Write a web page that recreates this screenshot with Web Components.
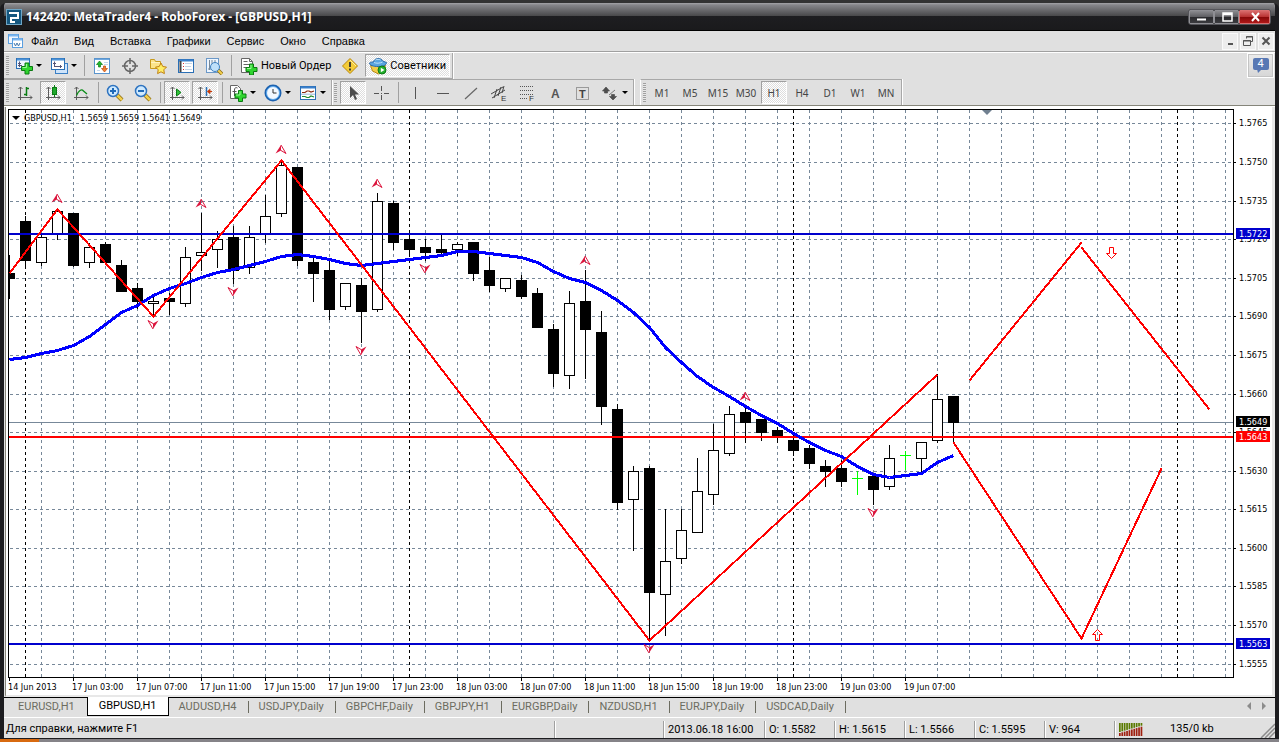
<!DOCTYPE html>
<html lang="ru">
<head>
<meta charset="utf-8">
<title>142420: MetaTrader4 - RoboForex - [GBPUSD,H1]</title>
<style>
html, body { margin: 0; height: 100%; background: #333; }
body { font: 11px/16px Roboto, "Liberation Sans", sans-serif; color: #000; overflow: hidden; }
</style>
</head>
<body>
<mt-window>
  <mt-titlebar slot="title">142420: MetaTrader4 - RoboForex - [GBPUSD,H1]</mt-titlebar>
  <mt-menubar slot="menu" items="Файл|Вид|Вставка|Графики|Сервис|Окно|Справка"></mt-menubar>
  <mt-toolbars slot="tools">
    <mt-toolbar label="Стандартная">
      <mt-button icon="newchart" label="Новый график" drop></mt-button>
      <mt-button icon="profiles" label="Профили" drop></mt-button>
      <mt-sep wide></mt-sep>
      <mt-button icon="market" label="Обзор рынка"></mt-button>
      <mt-button icon="target" label="Окно данных"></mt-button>
      <mt-button icon="folder" label="Навигатор"></mt-button>
      <mt-button icon="terminal" label="Терминал"></mt-button>
      <mt-button icon="tester" label="Тестер стратегий"></mt-button>
      <mt-sep wide></mt-sep>
      <mt-button icon="order" label="Новый Ордер" text>Новый Ордер</mt-button>
      <mt-button icon="warn" label="MetaEditor"></mt-button>
      <mt-button icon="expert" label="Советники" text pressed>Советники</mt-button>
    </mt-toolbar>
    <mt-message slot="aside">4</mt-message>
    <mt-toolbar slot="second" label="Графики">
      <mt-button icon="bars" label="Бары"></mt-button>
      <mt-button icon="candles" label="Японские свечи" pressed></mt-button>
      <mt-button icon="line" label="Линия"></mt-button>
      <mt-sep></mt-sep>
      <mt-button icon="zoomin" label="Увеличить"></mt-button>
      <mt-button icon="zoomout" label="Уменьшить"></mt-button>
      <mt-sep></mt-sep>
      <mt-button icon="autoscroll" label="Автопрокрутка" pressed></mt-button>
      <mt-button icon="shift" label="Сдвиг графика" pressed></mt-button>
      <mt-sep></mt-sep>
      <mt-button icon="indicators" label="Индикаторы" drop></mt-button>
      <mt-button icon="clock" label="Периоды" drop></mt-button>
      <mt-button icon="template" label="Шаблоны" drop></mt-button>
    </mt-toolbar>
    <mt-toolbar slot="second" label="Инструменты">
      <mt-button icon="cursor" label="Курсор" pressed></mt-button>
      <mt-button icon="cross" label="Перекрестие"></mt-button>
      <mt-sep></mt-sep>
      <mt-button icon="vline" label="Вертикальная линия"></mt-button>
      <mt-button icon="hline" label="Горизонтальная линия"></mt-button>
      <mt-button icon="trend" label="Трендовая линия"></mt-button>
      <mt-button icon="channel" label="Канал"></mt-button>
      <mt-button icon="fibo" label="Фибоначчи"></mt-button>
      <mt-button icon="text" label="Текст"></mt-button>
      <mt-button icon="label" label="Метка"></mt-button>
      <mt-button icon="arrows" label="Стрелки" drop></mt-button>
    </mt-toolbar>
    <mt-toolbar slot="second" label="Период" apart>
      <mt-button>M1</mt-button><mt-button>M5</mt-button><mt-button>M15</mt-button><mt-button>M30</mt-button><mt-button pressed>H1</mt-button><mt-button>H4</mt-button><mt-button>D1</mt-button><mt-button>W1</mt-button><mt-button>MN</mt-button>
    </mt-toolbar>
  </mt-toolbars>
  <mt-chart></mt-chart>
  <mt-tabs slot="tabs" active="1" items="EURUSD,H1|GBPUSD,H1|AUDUSD,H4|USDJPY,Daily|GBPCHF,Daily|GBPJPY,H1|EURGBP,Daily|NZDUSD,H1|EURJPY,Daily|USDCAD,Daily"></mt-tabs>
  <mt-status slot="status"></mt-status>
</mt-window>

<script>
const define = (name, html, init) => {
  const tpl = document.createElement('template');
  tpl.innerHTML = html;
  customElements.define(name, class extends HTMLElement {
    constructor() {
      super();
      this.attachShadow({ mode: 'open' }).append(tpl.content.cloneNode(true));
    }
    connectedCallback() { if (init && !this.ready) { this.ready = true; init(this, this.shadowRoot); } }
  });
};

/* ---------- icons, 18x18 grid ---------- */
const plus = (x, y) => `<path d="M${x + 3.5} ${y}h4v3.5h3.5v4h-3.5v3.5h-4v-3.5h-3.5v-4h3.5z" fill="#2fd52f" stroke="#0b7a12"/><path d="M${x + 5} ${y + 1}v3.5h-4" fill="none" stroke="#9df59a"/>`;
const axes = '<path d="M4.500 3v13M2 13.500h14M2.500 5l2-2 2 2M14 11.500l2 2-2 2" fill="none" stroke="#5c5c5c"/>';
const lens = inner => `<path d="M11 11l5 5" stroke="#8a6a10" stroke-width="4"/><path d="M11 11l5 5" stroke="#f2cf4c" stroke-width="2.500"/><circle cx="7" cy="7" r="5.500" fill="#cfeaff" stroke="#2f74c0" stroke-width="1.500"/>${inner}`;
const ICONS = {
  newchart: `<rect x="1.500" y="1.500" width="13" height="10" fill="#eef6ff" stroke="#2a6fb5"/><path d="M2 2.500h12" stroke="#4d93d8" stroke-width="2"/><path d="M4.500 4.500v5.500M3 8.500h4M3 6.500h3" stroke="#557" fill="none"/>${plus(6.5, 6)}`,
  profiles: `<rect x="5.500" y="6.500" width="12" height="10" fill="#cfe4fa" stroke="#3a7fc5"/><rect x="1.500" y="1.500" width="13" height="11" fill="#fff" stroke="#2a6fb5"/><path d="M2 2.500h12" stroke="#4d93d8" stroke-width="2"/><path d="M4.500 4.500v5M3 6.500h3M4 9.500h8M10.500 8v3" stroke="#557" fill="none"/>`,
  market: `<rect x="1.500" y="1.500" width="15" height="15" fill="#fff" stroke="#5a94cc"/><path d="M2 2.500h14" stroke="#6fa8e0"/><path d="M11 5.500h4M11 7.500h4M4 13.500h3" stroke="#c4d8ec"/><path d="M6.500 4l3 3.500h-2v2.500h-2v-2.500h-2z" fill="#1db82c" stroke="#0b7a12" stroke-width=".7"/><path d="M11.500 15l-3-3.500h2v-2.500h2v2.500h2z" fill="#f08030" stroke="#c04808" stroke-width=".7"/>`,
  target: `<circle cx="9" cy="9" r="5.500" fill="none" stroke="#666" stroke-width="1.500"/><path d="M9 1v6M9 11v6M1 9h6M11 9h6" stroke="#666" stroke-width="1.500"/>`,
  folder: `<path d="M1.500 2.500h4l1 2h5v7h-10z" fill="#fbe48a" stroke="#c79a1c"/><path d="M2 5.500h9" stroke="#fff4c0"/><path d="M12 6l1.800 3.500 3.700.6-2.700 2.700.6 3.800-3.400-1.800-3.400 1.800.6-3.800-2.700-2.700 3.700-.6z" fill="#ffee66" stroke="#c08010"/>`,
  terminal: `<rect x="1.500" y="2.500" width="15" height="13" fill="#fff" stroke="#2a6fb5"/><path d="M2 3.500h14" stroke="#3a80cc" stroke-width="2"/><path d="M3.500 4v11" stroke="#444" stroke-width="2"/><path d="M6 6.500h1M6 9.500h1M6 12.500h1" stroke="#d33"/><path d="M8 6.500h7M8 9.500h6M8 12.500h7" stroke="#c4d4e6"/>`,
  tester: `<rect x="1.500" y="1.500" width="12" height="14" fill="#eef6ff" stroke="#6b98c8"/><path d="M4.500 3v10M3 12h4M7 3v4M10 3v3" stroke="#789"/><path d="M13 13l4 4" stroke="#8a6a10" stroke-width="3.500"/><path d="M13 13l4 4" stroke="#f2cf4c" stroke-width="2"/><circle cx="10" cy="10" r="4.500" fill="#bfe0fa" stroke="#3f80c0"/>`,
  order: `<path d="M1.500 1.500h8l3 3v11h-11z" fill="#fff" stroke="#666"/><path d="M9.500 1.500v3h3" fill="none" stroke="#666"/><path d="M3.500 4.500h4M3.500 7.500h7M3.500 10.500h4" stroke="#666"/>${plus(6, 7)}`,
  warn: `<path d="M9 1.500l7.500 7.500-7.500 7.500-7.500-7.500z" fill="#f4cc38" stroke="#b8860b" stroke-linejoin="round"/><path d="M9 3l6 6" stroke="#fff0a0"/><path d="M9 5v5M9 11.500v2" stroke="#333" stroke-width="1.800"/>`,
  expert: `<path d="M1.500 8.500h15l-2 5-5 3.500-6-3z" fill="#f2cc48" stroke="#b98a18"/><path d="M4.500 5c1-4.500 8-4.500 9-1l4 1.500c0 3-4 4-8.500 4s-8.500-1-8.500-3.500c1-1 2-1 4-1z" fill="#5aa5e0" stroke="#2a6aa8"/><path d="M5 5.500c2 1 6 1 8.500-.5M6.500 3c1.500-1 3.500-1 5 0" fill="none" stroke="#bfe2fa"/><circle cx="13" cy="13" r="4" fill="#25b02e" stroke="#0b7a12"/><path d="M11.800 10.800v4.400l3.700-2.200z" fill="#fff"/>`,
  bars: `${axes}<path d="M10.500 3v9M8 10.500h2.500M10.500 4.500h2.500" fill="none" stroke="#0a7d14" stroke-width="1.500"/>`,
  candles: `${axes}<path d="M10.500 1v12" stroke="#0a7d14"/><rect x="8.500" y="3.500" width="4" height="7" fill="#1fa82c" stroke="#0a7d14"/>`,
  line: `${axes}<path d="M4.500 11.500c2-5 5-7 7-4.500l3.500 3" fill="none" stroke="#0a8d18" stroke-width="1.300"/>`,
  zoomin: lens('<path d="M4 7h6M7 4v6" stroke="#1f6ab8" stroke-width="2"/>'),
  zoomout: lens('<path d="M4 7h6" stroke="#1f6ab8" stroke-width="2"/>'),
  autoscroll: `${axes}<path d="M8.500 5l4.500 3.500-4.500 3.500z" fill="#2fc03a" stroke="#0a7d14"/>`,
  shift: `${axes}<path d="M10.500 3v9" stroke="#2a6fb5" stroke-width="1.500"/><path d="M12 7.500h4M14 5.500l-2.500 2 2.500 2z" stroke="#c63a08" fill="#c63a08"/>`,
  indicators: `<path d="M1.500 1.500h7l3 3v10h-10z" fill="#fff" stroke="#666"/><path d="M8.500 4c-2-1-3 0-3 2v6M3.500 7.500h4" fill="none" stroke="#555"/>${plus(6, 6.5)}`,
  clock: `<circle cx="9" cy="9" r="7.500" fill="#f2f8ff" stroke="#1c62b0" stroke-width="2"/><circle cx="9" cy="9" r="6.500" fill="none" stroke="#5aa8ee"/><path d="M9 5v4h3.500" fill="none" stroke="#333"/>`,
  template: `<rect x="1.500" y="2.500" width="15" height="13" fill="#fff" stroke="#2a6fb5"/><path d="M2 3.500h14" stroke="#3a80cc" stroke-width="2"/><path d="M3 8.500h3l2-1.500h2l2 1 3-1" fill="none" stroke="#8c2a10" stroke-width="1.200"/><path d="M3 12.500h3l2 1h2l2-1.500 3 1" fill="none" stroke="#1f8a2a" stroke-width="1.200"/><path d="M2 10.200h14" stroke="#9bb8d8"/>`,
  cursor: `<path d="M6 2v12l3-3 2 5 2-1-2-4.500h4z" fill="#4d4d4d"/>`,
  cross: `<path d="M9.500 2v5M9.500 11v5M2 9.500h5M12 9.500h5M9 9.500h1" stroke="#555"/>`,
  vline: `<path d="M9.500 3v12" stroke="#555"/>`,
  hline: `<path d="M3 9.500h12" stroke="#555"/>`,
  trend: `<path d="M3 15l12-11" stroke="#666" stroke-width="1.200"/>`,
  channel: `<path d="M1 10l12-7M2 14l13-8M4 14l3-9M8 12l3-9M12 9l2-7" stroke="#444" fill="none"/><text x="11" y="17" font-size="8" fill="#333" font-family="Liberation Sans">E</text>`,
  fibo: `<path d="M2 2.500h14M2 6.500h14M2 10.500h14M2 14.500h8" stroke="#555" stroke-dasharray="1 1"/><text x="11" y="17" font-size="8" fill="#333" font-family="Liberation Sans">F</text>`,
  text: `<text x="5" y="14" font-size="12" font-weight="700" fill="#555" font-family="Liberation Sans">A</text>`,
  label: `<rect x="2.500" y="3.500" width="12" height="12" fill="none" stroke="#555" stroke-dasharray="1 1"/><text x="5" y="14" font-size="11" font-weight="700" fill="#444" font-family="Liberation Sans">T</text>`,
  arrows: `<path d="M5 3l3.500 4h-2v2h-3v-2h-2zM12 16l-3.500-3.500h2v-2h3v2h2zM8 11l6-5" fill="#4d4d4d" stroke="#4d4d4d" stroke-width=".7"/>`,
};
const icon = n => `<svg width="18" height="18" viewBox="0 0 18 18" aria-hidden="true">${ICONS[n]}</svg>`;

/* ---------- window shell ---------- */
define('mt-window', `<style>
:host { display: flex; flex-direction: column; height: 100vh; box-sizing: border-box; padding-top: 3px; background: #333; }
.frame { flex: 1; min-height: 0; display: flex; flex-direction: column; background: #e0e0e0;
  border: solid #1c1c1f; border-width: 0 4px 1px; border-radius: 6px 6px 0 0; overflow: hidden; }
::slotted(mt-chart) { flex: 1; min-height: 0; }
.strip { height: 3px; background: linear-gradient(90deg, #d86a10 39px, #858388 39px); }
</style>
<div class="frame"><slot name="title"></slot><slot name="menu"></slot><slot name="tools"></slot><slot></slot><slot name="tabs"></slot><slot name="status"></slot></div>
<div class="strip"></div>`);

define('mt-titlebar', `<style>
:host { display: flex; align-items: center; height: 27px; margin: 0 -4px; padding: 0 8px 0 6px; border-bottom: 1px solid #000;
  background: linear-gradient(#a4a4a8, #86868a 2px, #48484a 13px, #1e1e21 13px, #1a1a1c); color: #fff; font: bold 12px/16px "Open Sans", sans-serif; }
svg { display: block; } .logo { margin-right: 4px; }
span { flex: 1; white-space: nowrap; overflow: hidden; }
.box { display: flex; border: 1px solid #55555a; border-radius: 3px; background: #111; }
button { width: 25px; height: 14px; padding: 0; border: 1px solid #8f8f94; border-radius: 1px; background: linear-gradient(#8a8a8e, #5c5c60 50%, #29292c 50%, #3c3c40); display: grid; place-items: center; }
button:last-child { width: 31px; border-color: #d87070; background: linear-gradient(#d86a6a, #b83030 50%, #860808 50%, #b01818); }
</style>
<svg class="logo" width="16" height="16" viewBox="0 0 16 16"><rect width="16" height="16" rx="1" fill="#15577f"/><rect x=".5" y=".5" width="15" height="15" fill="none" stroke="#6fa6c6"/><path d="M3 4h9v5h-7v4h4" fill="none" stroke="#fff" stroke-width="2"/></svg>
<span><slot></slot></span>
<div class="box">
<button aria-label="Свернуть"><svg width="12" height="10"><path d="M1 7.500h9" stroke="#fff" stroke-width="2"/></svg></button>
<button aria-label="Развернуть"><svg width="12" height="10"><path d="M2 1h9v8H2zM2 2.500h9" fill="none" stroke="#fff" stroke-width="1.500"/></svg></button>
<button aria-label="Закрыть"><svg width="12" height="10"><path d="M3 1l7 8M10 1l-7 8" stroke="#fff" stroke-width="2"/></svg></button>
</div>`);

define('mt-menubar', `<style>
:host { display: flex; align-items: center; height: 20px; padding-left: 4px; border-bottom: 1px solid #a0a0a0; box-shadow: 0 1px #fff; margin-bottom: 1px; font: 11px/16px "Liberation Sans", sans-serif; }
nav { display: flex; gap: 16px; flex: 1; padding-left: 8px; }
nav button { border: 0; padding: 0; background: none; font: inherit; color: #000; }
.mdi { display: flex; gap: 2px; padding-right: 1px; }
.mdi button { width: 16px; height: 17px; padding: 0; border: 1px solid #fafafa; background: #ededed; display: grid; place-items: center; }
</style>
<svg width="15" height="16" viewBox="0 0 15 16"><rect x=".5" y="1.500" width="10" height="9" fill="#eef6ff" stroke="#5a9fe0"/><path d="M1 2.500h9" stroke="#7ab6f0" stroke-width="2"/><rect x="4.500" y="5.500" width="10" height="9" fill="#fff" stroke="#5a9fe0"/><path d="M5 6.500h9" stroke="#7ab6f0" stroke-width="2"/><path d="M6 10l1.500 3 1.500-3 1.500 3 1.500-3" fill="none" stroke="#47a"/></svg>
<nav></nav>
<div class="mdi">
<button aria-label="Свернуть окно"><svg width="12" height="12"><path d="M4 9h5" stroke="#555" stroke-width="2"/></svg></button>
<button aria-label="Восстановить окно"><svg width="12" height="12"><path d="M4.500 3.500v-2h6v5h-2M4 2h7M1.500 5.500h7v5h-7zM1 6h8" fill="none" stroke="#555"/></svg></button>
<button aria-label="Закрыть окно"><svg width="12" height="12"><path d="M2.500 2.500l7 7M9.500 2.500l-7 7" stroke="#555" stroke-width="2"/></svg></button>
</div>`, (el, r) => {
  r.querySelector('nav').innerHTML = el.getAttribute('items').split('|').map(t => `<button>${t}</button>`).join('');
});

/* ---------- toolbars ---------- */
define('mt-toolbars', `<style>
:host { display: block; border-bottom: 1px solid #fff; }
.row { display: flex; height: 26px; }
.row + .row { border-bottom: 1px solid #85857a; }
.aside { margin-left: auto; }
</style>
<div class="row"><slot></slot><div class="aside"><slot name="aside"></slot></div></div>
<div class="row"><slot name="second"></slot></div>`);

define('mt-toolbar', `<style>
:host { display: flex; align-items: center; box-sizing: border-box; border: solid #a8a8a8; border-width: 0 1px 1px 0; padding-right: 1px; box-shadow: 1px 0 #fff; height: 26px; }
:host([slot=second]) { border-width: 1px 1px 0 0; }
:host([apart]) { margin-left: 6px; border-left: 1px solid #fff; }
.grip { width: 3px; height: 19px; margin: 0 2px; background: repeating-linear-gradient(#a0a0a0 0 1px, #e8e8e8 1px 2px); }
</style><div class="grip"></div><slot></slot>`, el => { el.setAttribute('role', 'toolbar'); el.setAttribute('aria-label', el.getAttribute('label')); });

define('mt-sep', `<style>
:host { display: block; width: 1px; height: 21px; margin: 0 2px 0 3px; background: #a0a0a0; }
:host([wide]) { margin-right: 3px; }
</style>`);

define('mt-button', `<style>
:host { display: block; }
button { box-sizing: border-box; width: 26px; height: 23px; margin: 0 1px; padding: 0; border: 1px solid transparent; background: none; display: flex; align-items: center; justify-content: center; font: 10px/16px "Noto Sans", sans-serif; color: #444; white-space: nowrap; }
.ico { display: contents; }
svg { display: block; flex: none; }
:host([text]) button { width: auto; padding: 0 3px; gap: 3px; font: 11px/16px Roboto, "Liberation Sans", sans-serif; color: #000; }
:host([pressed]) button { border-color: #a0a0a0 #fff #fff #a0a0a0; background: repeating-conic-gradient(#fff 0 25%, #dedede 0 50%) 0 0 / 2px 2px; }
:host([drop]) button { width: 33px; padding-left: 2px; gap: 3px; justify-content: flex-start; }
.caret { display: none; border: 3px solid transparent; border-top-color: #000; border-bottom: 0; }
:host([drop]) .caret { display: block; }
</style><button><span class="ico"></span><slot></slot><i class="caret"></i></button>`, (el, r) => {
  const n = el.getAttribute('icon'), b = r.querySelector('button');
  if (n) r.querySelector('.ico').innerHTML = icon(n);
  if (n && !el.hasAttribute('text')) b.setAttribute('aria-label', el.getAttribute('label'));
  if (el.hasAttribute('pressed')) b.setAttribute('aria-pressed', 'true');
});

define('mt-message', `<style>
:host { display: block; padding-right: 1px; }
button { display: grid; place-items: center; width: 27px; height: 25px; padding: 0; border: 1px solid #fff; outline: 1px solid #c4c4c4; outline-offset: -2px; background: linear-gradient(#ececec, #d6d6d6); }
.b { position: relative; width: 16px; height: 12px; border-radius: 2px; background: #5878b4; color: #fff; font: 11px/12px Roboto, sans-serif; margin-bottom: 4px; }
.b::after { content: ""; position: absolute; left: 4px; top: 11px; border: 4px solid transparent; border-top-color: #5878b4; border-bottom: 0; border-left-width: 1px; }
</style><button aria-label="Сообщения"><div class="b"><slot></slot></div></button>`);

/* ---------- chart ---------- */
/* x step is 16; each row: kind (0 hollow, 1 filled, 2 doji), high, body top, body bottom, low */
const CANDLES = [
  [1,255,273,278,299],[1,216,221,260,266],[0,234,237,262,266],[0,209,211,234,240],[1,213,213,265,267],[0,243,247,262,268],
  [1,242,244,262,264],[1,260,265,291,291],[1,283,288,301,309],[0,296,301,303,316],[1,293,298,301,315],[0,247,257,303,307],
  [0,213,252,255,271],[0,231,239,249,268],[1,226,237,270,284],[0,226,237,267,274],[0,195,216,234,243],[0,160,165,213,217],
  [1,167,167,260,266],[1,256,262,273,302],[1,261,270,309,320],[0,283,283,306,310],[1,278,285,311,343],[0,193,201,309,312],
  [1,201,203,242,250],[1,234,239,249,255],[1,239,247,252,261],[1,234,249,252,254],[0,242,244,249,256],[1,242,242,273,281],
  [1,257,270,285,292],[0,278,278,288,292],[1,275,280,296,299],[1,288,293,327,328],[1,324,329,373,387],[0,291,303,375,389],
  [1,270,301,329,379],[1,311,332,406,425],[1,404,409,502,510],[0,466,471,499,551],[1,466,468,592,639],[0,509,561,594,636],
  [0,509,530,558,564],[0,458,491,532,532],[0,424,450,494,505],[0,406,414,453,456],[1,408,412,422,443],[1,419,419,432,441],
  [1,427,430,435,443],[1,437,440,450,456],[1,445,448,463,469],[1,460,466,471,487],[1,460,468,481,487],[2,471,478,478,495],
  [1,474,476,489,505],[0,445,458,486,490],[2,451,455,455,470],[0,442,442,458,472],[0,374,399,440,443],[1,396,396,422,443],
];
const MA = [359,357,353,350,345,336,324,312,305,295,288,283,277,272,269,265,261,256,254,256,259,263,265,263,261,259,257,255,251,251,253,255,257,262,271,278,282,290,300,312,327,347,362,376,387,396,406,415,423,433,442,450,456,466,474,477,475,473,462,455];
const LEVELS = [[123,'1.5765'],[162,'1.5750'],[201,'1.5735'],[239,'1.5720'],[278,'1.5705'],[316,'1.5690'],[355,'1.5675'],[394,'1.5660'],[432,'1.5645'],[471,'1.5630'],[509,'1.5615'],[548,'1.5600'],[586,'1.5585'],[625,'1.5570'],[664,'1.5555']];
const TIMES = ['14 Jun 2013','17 Jun 03:00','17 Jun 07:00','17 Jun 11:00','17 Jun 15:00','17 Jun 19:00','17 Jun 23:00','18 Jun 03:00','18 Jun 07:00','18 Jun 11:00','18 Jun 15:00','18 Jun 19:00','18 Jun 23:00','19 Jun 03:00','19 Jun 07:00'];
const TAGS = [[234,'1.5722','#0000cd'],[422,'1.5649','#000'],[437,'1.5643','#f00'],[644,'1.5563','#0000cd']];

define('mt-chart', `<style>
:host { display: grid; grid-template: minmax(0, 1fr) 17px / minmax(0, 1fr) 38px; margin: 0 0 0 1px; padding: 2px 3px 0 2px; background: #fff; border-left: 1px solid #85857a; border-bottom: 2px solid #e8e8e8; box-shadow: inset -3px 0 #e8e8e8; font: 9px/12px "DejaVu Sans Condensed", "DejaVu Sans", sans-serif; }
.plot { position: relative; border: 1px solid #000; overflow: hidden; }
svg { display: block; width: 100%; height: 100%; overflow: hidden; shape-rendering: crispEdges; }
.price svg { overflow: visible; } .time { grid-column: 1 / 3; }
.smooth { shape-rendering: auto; }
.head { position: absolute; left: 3px; top: 2px; display: flex; gap: 4px; align-items: center; white-space: pre; }
.head i { border: 4px solid transparent; border-top-color: #000; border-bottom: 0; }
.head b { font-weight: 400; margin-right: 4px; }
</style><div class="plot"></div><div class="price"></div><div class="time"></div>`, (el, r) => {
  let s = '';
  for (const [y] of LEVELS) s += `<line x1="10" x2="3000" y1="${y + .5}" y2="${y + .5}" stroke="#778899" stroke-dasharray="3 3"/>`;
  for (let x = 41; x < 3000; x += 32) s += `<line x1="${x + .5}" x2="${x + .5}" y1="110" y2="2000" stroke="#778899" stroke-dasharray="3 3"/>`;
  for (const x of [25, 409, 793, 1177]) s += `<line x1="${x + .5}" x2="${x + .5}" y1="110" y2="2000" stroke="#000" stroke-dasharray="3 3"/>`;
  s += '<rect x="9" y="422" width="3000" height="1" fill="#778899"/>';
  CANDLES.forEach(([k, h, t, b, l], i) => {
    const x = 9 + 16 * i, c = k === 2 ? '#00ff00' : '#000';
    s += `<rect x="${x}" y="${h}" width="1" height="${l - h}" fill="${c}"/>`;
    if (k === 1) s += `<rect x="${x - 5}" y="${t}" width="11" height="${b - t + 1}"/>`;
    else if (k === 2) s += `<rect x="${x - 5}" y="${t}" width="11" height="1" fill="${c}"/>`;
    else s += `<rect x="${x - 4.5}" y="${t + .5}" width="10" height="${b - t}" fill="#fff" stroke="#000"/>`;
  });
  s += '<rect x="9" y="233" width="3000" height="2" fill="#0000cd"/><rect x="9" y="643" width="3000" height="2" fill="#0000cd"/><rect x="9" y="436" width="3000" height="2" fill="#f00"/>';
  s += `<polyline points="${MA.map((y, i) => `${9.5 + 16 * i},${y + .5}`).join(' ')}" fill="none" stroke="#0000ff" stroke-width="3" stroke-linejoin="round"/>`;
  for (const p of ['9,273 57,209 153,316 281,160 649,640 937,374', '969,380 1081,242', '1081,247 1209,409', '953,442 1081,638 1161,468'])
    s += `<polyline points="${p}" fill="none" stroke="#f00" stroke-width="2" transform="translate(.5 .5)"/>`;
  for (const [x, y] of [[57,198],[201,203],[281,149],[377,183],[585,260],[745,396]])
    s += `<g class="smooth" transform="translate(${x} ${y})"><path d="M0-4L-5.500 4.500L0 1.500z" fill="#dc143c"/><path d="M0-4L5 4.500L0 1.500" fill="none" stroke="#dc143c"/></g>`;
  for (const [x, y] of [[153,324],[233,291],[361,350],[425,268],[649,648],[873,512]])
    s += `<g class="smooth" transform="translate(${x} ${y + 1})"><path d="M0 4L5.500-4.500L0-1.500z" fill="#dc143c"/><path d="M0 4L-5-4.500L0-1.500" fill="none" stroke="#dc143c"/></g>`;
  s += '<g class="smooth" fill="none" stroke="#f00"><path d="M1095.500 640.500v-6h-3l5-5 5 5h-3v6z"/><path d="M1109.500 247.500v6h-3l5 5 5-5h-3v-6z"/></g>';
  s += '<path class="smooth" d="M982 110h10l-5 5z" fill="#708090"/>';
  r.querySelector('.plot').innerHTML = `<svg><g transform="translate(-9 -110)">${s}</g></svg><div class="head"><i></i><b>GBPUSD,H1</b><span>1.5659 1.5659 1.5641 1.5649</span></div>`;

  let p = '';
  for (const [y, t] of LEVELS) p += `<rect x="1234" y="${y}" width="2" height="1"/><text x="1239" y="${y + 3}">${t}</text>`;
  for (const [y, t, c] of TAGS) p += `<rect x="1236" y="${y - 6}" width="34" height="11" fill="${c}"/><text x="1239" y="${y + 3}" fill="#fff">${t}</text>`;
  r.querySelector('.price').innerHTML = `<svg><g transform="translate(-1234 -109)">${p}</g></svg>`;
  r.querySelector('.time').innerHTML = `<svg><g transform="translate(-8 0)">${TIMES.map((t, i) => `<rect x="${9 + 64 * i}" width="1" height="3"/><text x="${8 + 64 * i}" y="12">${t}</text>`).join('')}</g></svg>`;
});

/* ---------- tabs and status ---------- */
define('mt-tabs', `<style>
:host { display: flex; height: 20px; border-bottom: 1px solid #fff; box-shadow: inset 0 1px #000; padding-left: 4px; }
.list { display: flex; flex: 1; }
button { border: 0; padding: 0; background: none; font: 11px/18px Roboto, "Liberation Sans", sans-serif; color: #6c6c60; }
.list button { position: relative; height: 19px; padding: 0 12px 0 10px; }
.list button::after { content: ""; position: absolute; right: 0; top: 4px; height: 12px; border-right: 1px solid #6c6c60; }
.list .quiet::after { display: none; }
.list .on { border: 1px solid #000; border-top: 0; background: #fff; color: #000; padding: 0 11px; }
.nav { display: flex; gap: 9px; align-items: center; padding-right: 8px; }
</style><div class="list" role="tablist"></div>
<div class="nav"><button aria-label="Влево"><svg width="6" height="8"><path d="M5 0v8L1 4z" fill="#8c8c8c"/></svg></button><button aria-label="Вправо"><svg width="6" height="8"><path d="M1 0v8l4-4z" fill="#8c8c8c"/></svg></button></div>`, (el, r) => {
  const a = +el.getAttribute('active');
  r.querySelector('.list').innerHTML = el.getAttribute('items').split('|').map((t, i) =>
    `<button role="tab" aria-selected="${i === a}" class="${i === a ? 'on quiet' : i < a ? 'quiet' : ''}">${t}</button>`).join('');
});

define('mt-status', `<style>
:host { display: flex; box-sizing: border-box; height: 20px; padding: 2px 0 0 2px; align-items: center; font: 11px/18px Roboto, "Liberation Sans", sans-serif; white-space: nowrap; position: relative; }
.msg { flex: 1; }
.c { box-sizing: border-box; height: 17px; padding-left: 4px; border-left: 1px solid #a0a0a0; box-shadow: inset 1px 0 #fff; }
.w108 { width: 109px; } .w101 { width: 101px; } .w70 { width: 70px; }
.net { width: 161px; display: flex; gap: 27px; align-items: center; }
.size { position: absolute; right: 0; bottom: 0; }
</style>
<span class="msg">Для справки, нажмите F1</span><span class="c w108"></span><span class="c w101">2013.06.18 16:00</span><span class="c w70">O: 1.5582</span><span class="c w70">H: 1.5615</span><span class="c w70">L: 1.5566</span><span class="c w70">C: 1.5595</span><span class="c w70">V: 964</span>
<span class="c net"><svg width="24" height="13" class="bars"></svg>135/0 kb</span>
<svg class="size" width="15" height="15"><path d="M1 15L15 1M5 15L15 5M9 15l6-6" stroke="#8c8c8c" stroke-width="1.500"/></svg>`, (el, r) => {
  r.querySelector('.bars').innerHTML = Array.from({ length: 10 }, (_, i) =>
    `<rect x="${i * 2.4}" width="1.700" height="${9 - i * .7}" fill="#5a7a00"/><rect x="${i * 2.4}" y="${10 - i * .7}" width="1.700" height="${3 + i * .7}" fill="#a02010"/>`).join('');
});
</script>
</body>
</html>
